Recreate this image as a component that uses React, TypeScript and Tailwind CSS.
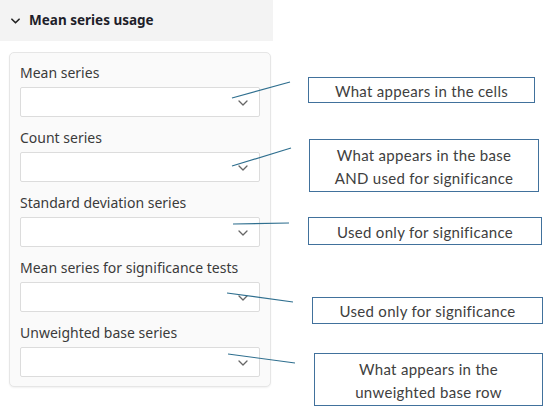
import React from "react";

const fields = [
  "Mean series",
  "Count series",
  "Standard deviation series",
  "Mean series for significance tests",
  "Unweighted base series",
];

type Note = { top: number; left: number; width: number; height: number; lines: string[] };

const notes: Note[] = [
  { top: 77, left: 308, width: 227, height: 26, lines: ["What appears in the cells"] },
  { top: 139, left: 309, width: 230, height: 53, lines: ["What appears in the base", "AND used for significance"] },
  { top: 217, left: 308, width: 234, height: 28, lines: ["Used only for significance"] },
  { top: 297, left: 312, width: 231, height: 27, lines: ["Used only for significance"] },
  { top: 353, left: 314, width: 229, height: 53, lines: ["What appears in the", "unweighted base row"] },
];

const connectors = [
  [232, 98, 290, 82],
  [232, 166, 291, 148],
  [233, 224, 289, 223],
  [227, 293, 293, 302],
  [228, 354, 295, 363],
];

function Chevron({ className }: { className?: string }) {
  return (
    <svg className={className} viewBox="0 0 10 6" fill="none" stroke="currentColor" strokeWidth={1.3} strokeLinecap="round" strokeLinejoin="round">
      <path d="M1 1l4 4 4-4" />
    </svg>
  );
}

export default function App() {
  return (
    <div className="relative w-[546px] h-[410px] bg-white overflow-hidden" style={{ fontFamily: '"Noto Sans", "Open Sans", sans-serif' }}>
      <div className="w-[273px]">
        <div className="h-[41px] bg-[#f3f3f3] flex items-center pl-[11px] gap-[9px]">
          <Chevron className="w-[9px] h-[6px] text-[#222] [stroke-width:1.8]" />
          <span className="text-[13.5px] font-bold text-[#1e1e2a]">Mean series usage</span>
        </div>
        <div className="mt-[11px] ml-[9px] w-[262px] rounded-[5px] border border-[#e6e6e6] bg-[#fafafa] shadow-[0_1px_2px_rgba(0,0,0,0.06)] px-[10px] pt-[10px] pb-[9px] flex flex-col gap-[11px]">
          {fields.map((f) => (
            <div key={f} className="flex flex-col gap-[4px]">
              <div className="h-[20px] leading-[20px] text-[14px] text-[#3b3b3b]">{f}</div>
              <div className="h-[30px] rounded-[2px] border border-[#dcdcdc] bg-white flex items-center justify-end pr-[11px]">
                <Chevron className="w-[10px] h-[6px] text-[#666] mt-[2px]" />
              </div>
            </div>
          ))}
        </div>
      </div>

      <svg className="absolute inset-0 pointer-events-none" width={546} height={410}>
        {connectors.map(([x1, y1, x2, y2], i) => (
          <line key={i} x1={x1} y1={y1} x2={x2} y2={y2} stroke="#2f6f8f" strokeWidth={1.2} />
        ))}
      </svg>

      {notes.map((n, i) => (
        <div
          key={i}
          className="absolute border-[1.5px] border-[#41719c] bg-white flex flex-col items-center justify-center pt-[2px] text-[15px] leading-[23px] text-[#404040] tracking-[0.3px]"
          style={{ top: n.top, left: n.left, width: n.width, height: n.height, fontFamily: '"Lato", "Liberation Sans", sans-serif' }}
        >
          {n.lines.map((l) => (
            <span key={l}>{l}</span>
          ))}
        </div>
      ))}
    </div>
  );
}
